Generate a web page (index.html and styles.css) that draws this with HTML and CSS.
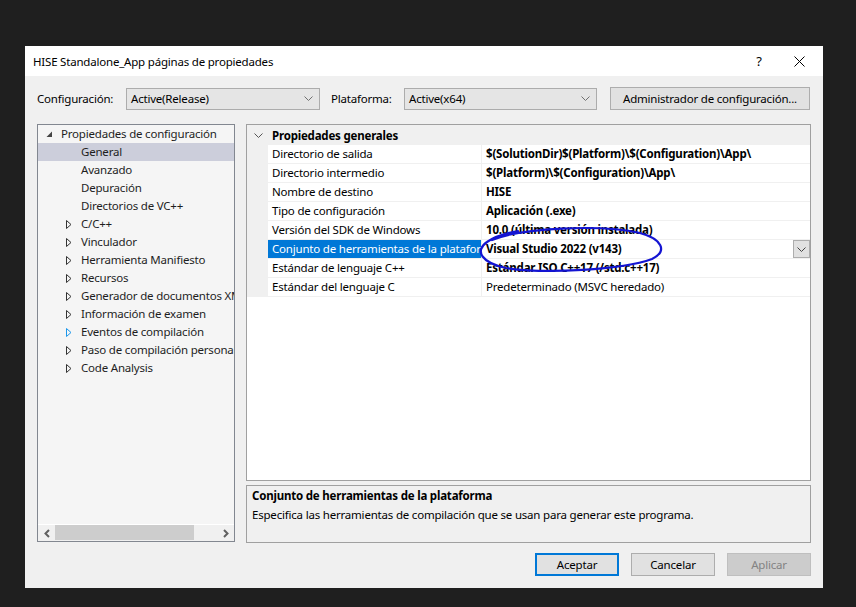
FILE: index.html
```html
<!DOCTYPE html>
<html lang="es">
<head>
    <meta charset="UTF-8">
    <title>HISE Standalone_App páginas de propiedades</title>
    <link rel="stylesheet" href="styles.css">
</head>
<body>
    <div id="dialog">
        <div class="titlebar">
            <span class="title">HISE Standalone_App páginas de propiedades</span>
            <span class="help">?</span>
            <span class="close">
                <svg width="11" height="11" viewBox="0 0 11 11"><path d="M0.5 0.5 L10.5 10.5 M10.5 0.5 L0.5 10.5" stroke="#000" stroke-width="1" fill="none"/></svg>
            </span>
        </div>

        <div class="toolbar">
            <label class="lbl-conf">Configuración:</label>
            <div class="combo combo-conf">
                <span>Active(Release)</span>
                <svg class="chev" width="9" height="5" viewBox="0 0 9 5"><path d="M0.5 0.5 L4.5 4.5 L8.5 0.5" stroke="#707070" fill="none"/></svg>
            </div>
            <label class="lbl-plat">Plataforma:</label>
            <div class="combo combo-plat">
                <span>Active(x64)</span>
                <svg class="chev" width="9" height="5" viewBox="0 0 9 5"><path d="M0.5 0.5 L4.5 4.5 L8.5 0.5" stroke="#707070" fill="none"/></svg>
            </div>
            <div class="btn btn-admin">Administrador de configuración...</div>
        </div>

        <div class="main">
            <div class="tree">
                <ul class="tree-list">
                    <li class="lvl0"><span class="arr"><svg width="7" height="7" viewBox="0 0 7 7"><path d="M6 0.5 L6 6 L0.5 6 Z" fill="#444"/></svg></span>Propiedades de configuración</li>
                    <li class="lvl1 selected"><span class="arr"></span>General</li>
                    <li class="lvl1"><span class="arr"></span>Avanzado</li>
                    <li class="lvl1"><span class="arr"></span>Depuración</li>
                    <li class="lvl1"><span class="arr"></span>Directorios de VC++</li>
                    <li class="lvl1"><span class="arr"><svg width="6" height="9" viewBox="0 0 6 9"><path d="M0.5 0.5 L5 4.5 L0.5 8.5 Z" stroke="#333" fill="none"/></svg></span>C/C++</li>
                    <li class="lvl1"><span class="arr"><svg width="6" height="9" viewBox="0 0 6 9"><path d="M0.5 0.5 L5 4.5 L0.5 8.5 Z" stroke="#333" fill="none"/></svg></span>Vinculador</li>
                    <li class="lvl1"><span class="arr"><svg width="6" height="9" viewBox="0 0 6 9"><path d="M0.5 0.5 L5 4.5 L0.5 8.5 Z" stroke="#333" fill="none"/></svg></span>Herramienta Manifiesto</li>
                    <li class="lvl1"><span class="arr"><svg width="6" height="9" viewBox="0 0 6 9"><path d="M0.5 0.5 L5 4.5 L0.5 8.5 Z" stroke="#333" fill="none"/></svg></span>Recursos</li>
                    <li class="lvl1"><span class="arr"><svg width="6" height="9" viewBox="0 0 6 9"><path d="M0.5 0.5 L5 4.5 L0.5 8.5 Z" stroke="#333" fill="none"/></svg></span>Generador de documentos XML</li>
                    <li class="lvl1"><span class="arr"><svg width="6" height="9" viewBox="0 0 6 9"><path d="M0.5 0.5 L5 4.5 L0.5 8.5 Z" stroke="#333" fill="none"/></svg></span>Información de examen</li>
                    <li class="lvl1"><span class="arr"><svg width="6" height="9" viewBox="0 0 6 9"><path d="M0.5 0.5 L5 4.5 L0.5 8.5 Z" stroke="#1c97ea" fill="none"/></svg></span>Eventos de compilación</li>
                    <li class="lvl1"><span class="arr"><svg width="6" height="9" viewBox="0 0 6 9"><path d="M0.5 0.5 L5 4.5 L0.5 8.5 Z" stroke="#333" fill="none"/></svg></span>Paso de compilación personalizado</li>
                    <li class="lvl1"><span class="arr"><svg width="6" height="9" viewBox="0 0 6 9"><path d="M0.5 0.5 L5 4.5 L0.5 8.5 Z" stroke="#333" fill="none"/></svg></span>Code Analysis</li>
                </ul>
                <div class="hscroll">
                    <span class="sarrow"><svg width="6" height="9" viewBox="0 0 6 9"><path d="M5 1 L1.5 4.5 L5 8" stroke="#606060" stroke-width="2" fill="none"/></svg></span>
                    <div class="strack"><div class="sthumb"></div></div>
                    <span class="sarrow"><svg width="6" height="9" viewBox="0 0 6 9"><path d="M1 1 L4.5 4.5 L1 8" stroke="#606060" stroke-width="2" fill="none"/></svg></span>
                </div>
            </div>

            <div class="right">
                <div class="grid">
                    <div class="grid-head">
                        <span class="gutter"><svg width="9" height="5" viewBox="0 0 9 5"><path d="M0.5 0.5 L4.5 4.5 L8.5 0.5" stroke="#555" fill="none"/></svg></span>
                        <span class="head-text">Propiedades generales</span>
                    </div>
                    <div class="row"><span class="gutter"></span><span class="name">Directorio de salida</span><span class="value bold">$(SolutionDir)$(Platform)\$(Configuration)\App\</span></div>
                    <div class="row"><span class="gutter"></span><span class="name">Directorio intermedio</span><span class="value bold">$(Platform)\$(Configuration)\App\</span></div>
                    <div class="row"><span class="gutter"></span><span class="name">Nombre de destino</span><span class="value bold">HISE</span></div>
                    <div class="row"><span class="gutter"></span><span class="name">Tipo de configuración</span><span class="value bold">Aplicación (.exe)</span></div>
                    <div class="row"><span class="gutter"></span><span class="name">Versión del SDK de Windows</span><span class="value bold">10.0 (última versión instalada)</span></div>
                    <div class="row active"><span class="gutter"></span><span class="name">Conjunto de herramientas de la plataforma</span><span class="value bold">Visual Studio 2022 (v143)<span class="drop"><svg width="9" height="5" viewBox="0 0 9 5"><path d="M0.5 0.5 L4.5 4.5 L8.5 0.5" stroke="#444" fill="none"/></svg></span></span></div>
                    <div class="row"><span class="gutter"></span><span class="name">Estándar de lenguaje C++</span><span class="value bold">Estándar ISO C++17 (/std:c++17)</span></div>
                    <div class="row"><span class="gutter"></span><span class="name">Estándar del lenguaje C</span><span class="value">Predeterminado (MSVC heredado)</span></div>
                </div>
                <div class="desc">
                    <div class="desc-title">Conjunto de herramientas de la plataforma</div>
                    <div class="desc-text">Especifica las herramientas de compilación que se usan para generar este programa.</div>
                </div>
            </div>
        </div>

        <div class="buttons">
            <div class="btn btn-default">Aceptar</div>
            <div class="btn">Cancelar</div>
            <div class="btn btn-disabled">Aplicar</div>
        </div>

        <!-- hand drawn mark over the toolset value -->
        <svg class="ink" viewBox="25 46 798 542" width="798" height="542">
            <path d="M492 240 C520 228, 600 224, 640 233 C662 239, 668 251, 652 259 C622 270, 545 274, 506 268 C482 263, 474 251, 487 242 C495 236, 506 233, 518 231" stroke="#1414d2" stroke-width="2.2" fill="none" stroke-linecap="round"/>
        </svg>
    </div>
</body>
</html>
```

FILE: styles.css
```css
*{
    margin:0;
    padding:0;
    box-sizing: border-box;
}
body{
    background: #1f1f1f;
    font-family: "Noto Sans", "Open Sans", sans-serif;
    font-size: 11.5px;
    letter-spacing: -0.2px;
    color: #000;
}
li{
    list-style: none;
}
#dialog{
    position: relative;
    margin: 46px 0 0 25px;
    width: 798px;
    height: 542px;
    background: #f0f0f0;
}
.titlebar{
    height: 30px;
    background: #fff;
    display: flex;
    align-items: center;
    padding-left: 8px;
}
.title{
    flex: 1;
}
.help{
    width: 20px;
    text-align: center;
    margin-right: 25px;
    font-size: 13px;
}
.close{
    width: 11px;
    height: 11px;
    display: flex;
    margin-right: 18px;
}
.toolbar{
    display: flex;
    align-items: center;
    height: 23px;
    margin-top: 11px;
    padding: 0 12px;
}
.lbl-conf{
    width: 89px;
}
.lbl-plat{
    width: 73px;
    margin-left: 11px;
}
.combo{
    height: 22px;
    background: #e5e5e5;
    border: 1px solid #acacac;
    display: flex;
    align-items: center;
    justify-content: space-between;
    padding: 0 6px 0 4px;
}
.combo-conf{
    width: 194px;
}
.combo-plat{
    width: 193px;
}
.btn{
    height: 23px;
    width: 84px;
    background: #e1e1e1;
    border: 1px solid #adadad;
    display: flex;
    align-items: center;
    justify-content: center;
}
.btn-admin{
    width: 200px;
    margin-left: 13px;
}
.main{
    display: flex;
    gap: 11px;
    margin-top: 14px;
    padding: 0 12px;
    height: 419px;
}
.tree{
    width: 198px;
    height: 418px;
    background: #f5f5f5;
    border: 1px solid #828790;
    display: flex;
    flex-direction: column;
}
.tree-list{
    flex: 1;
    overflow: hidden;
    color: #1e1e1e;
}
.tree-list li{
    height: 18px;
    line-height: 18px;
    white-space: nowrap;
    display: flex;
    align-items: center;
}
.tree-list .lvl0{
    padding-left: 8px;
}
.tree-list .lvl1{
    padding-left: 28px;
}
.tree-list .selected{
    background: #cccedb;
}
.arr{
    width: 15px;
    flex: none;
    display: flex;
    align-items: center;
}
.hscroll{
    height: 17px;
    background: #f0f0f0;
    border-top: 1px solid #fff;
    display: flex;
    align-items: center;
}
.sarrow{
    width: 17px;
    height: 16px;
    display: flex;
    align-items: center;
    justify-content: center;
}
.strack{
    flex: 1;
    height: 16px;
    padding-right: 23px;
}
.sthumb{
    height: 15px;
    background: #cdcdcd;
}
.right{
    width: 565px;
    display: flex;
    flex-direction: column;
    gap: 4px;
}
.grid{
    height: 357px;
    background: #fff;
    border: 1px solid #a0a0a0;
}
.grid-head{
    height: 20px;
    background: #f0f0f0;
    display: flex;
    align-items: center;
    font-weight: bold;
}
.gutter{
    width: 21px;
    height: 100%;
    flex: none;
    background: #f0f0f0;
    display: flex;
    align-items: center;
    justify-content: center;
    padding-left: 1px;
}
.head-text{
    padding-left: 4px;
}
.row{
    height: 19px;
    display: flex;
    border-bottom: 1px solid #f0f0f0;
}
.row .gutter{
    height: 19px;
    margin-bottom: -1px;
}
.name{
    width: 214px;
    flex: none;
    padding-left: 4px;
    line-height: 18px;
    white-space: nowrap;
    overflow: hidden;
    border-right: 1px solid #f0f0f0;
}
.value{
    flex: 1;
    padding-left: 4px;
    line-height: 18px;
    white-space: nowrap;
    display: flex;
    justify-content: space-between;
}
.bold{
    font-weight: bold;
}
.row.active .name{
    background: #0078d7;
    color: #fff;
}
.drop{
    width: 17px;
    height: 18px;
    background: #e1e1e1;
    border: 1px solid #adadad;
    display: flex;
    align-items: center;
    justify-content: center;
}
.desc{
    height: 58px;
    border: 1px solid #a0a0a0;
    padding: 0 5px;
    line-height: 19px;
}
.desc-title{
    font-weight: bold;
}
.buttons{
    display: flex;
    justify-content: flex-end;
    gap: 12px;
    margin-top: 10px;
    padding: 0 12px;
}
.btn-default{
    border: 2px solid #0078d7;
}
.btn-disabled{
    background: #cccccc;
    border-color: #bfbfbf;
    color: #838383;
}
.ink{
    position: absolute;
    left: 0;
    top: 0;
    pointer-events: none;
}
```
